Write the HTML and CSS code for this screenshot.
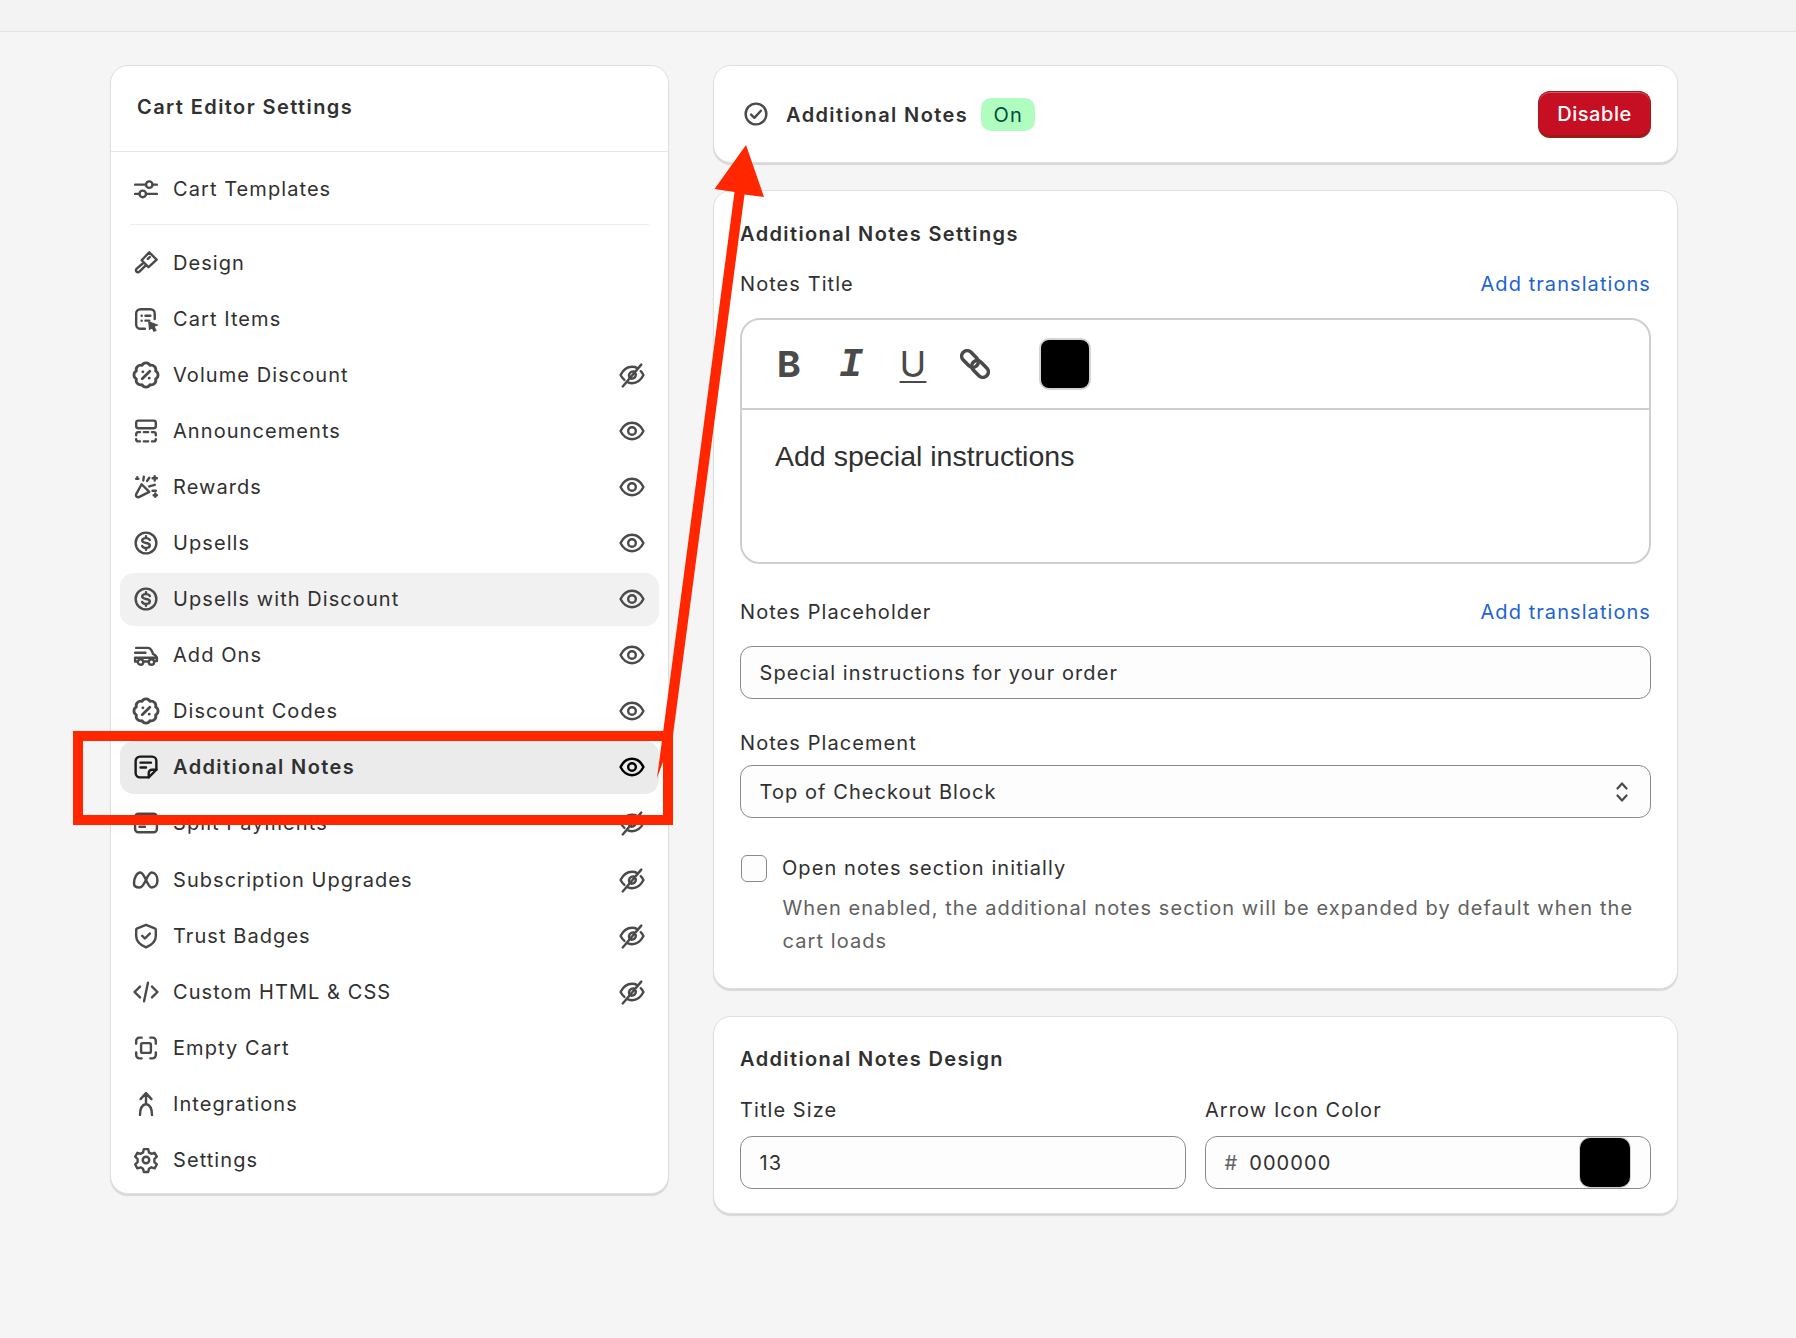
FILE: index.html
```html
<!DOCTYPE html>
<html lang="en">
<head>
    <meta charset="UTF-8">
    <title>Cart Editor Settings</title>
    <link rel="stylesheet" href="styles.css">
</head>
<body>
    <svg class="defs" xmlns="http://www.w3.org/2000/svg">
        <symbol id="i-sliders" viewBox="1 1 22 22"><path d="M2 8h10M18 8h4M2 16.500h4M12 16.500h10"/><circle cx="15" cy="8" r="3"/><circle cx="9" cy="16.500" r="3"/></symbol>
        <symbol id="i-brush" viewBox="1 1 22 22"><path d="M15 2.200l6.800 6.800-7.500 6.800-6.300-6.300zM15.500 6.500l-1.800 1.800M9.500 12l-6 5.200c-1 1-.9 1.900-.2 2.700s1.800.9 2.700 0l5.800-5.700"/></symbol>
        <symbol id="i-items" viewBox="1 1 22 22"><path d="M11 21H7a4 4 0 0 1-4-4V7a4 4 0 0 1 4-4h9a4 4 0 0 1 4 4v5"/><path d="M8 9h.1M8 13.500h.1M11.500 9H16M11.500 13.500H15"/><path class="solid" d="M14.500 14.500l8 3-3.200 1.300 1.900 3.700-2 .8-1.700-3.700-2.300 2z"/></symbol>
        <symbol id="i-percent" viewBox="2.500 2.500 19 19"><path d="M15.140 4.420A3.500 3.500 0 0 1 19.580 8.860 3.500 3.500 0 0 1 19.580 15.140 3.500 3.500 0 0 1 15.140 19.580 3.500 3.500 0 0 1 8.860 19.580 3.500 3.500 0 0 1 4.420 15.140 3.500 3.500 0 0 1 4.420 8.860 3.500 3.500 0 0 1 8.860 4.420 3.500 3.500 0 0 1 15.140 4.420z"/><path d="M9 15l6-6M9.500 9.500h.1M14.500 14.500h.1"/></symbol>
        <symbol id="i-announce" viewBox="1 1 22 22"><rect x="3" y="2.500" width="18" height="7" rx="2"/><path d="M3 16v-1a2 2 0 0 1 2-2h1.500M10 13h4M17.500 13H19a2 2 0 0 1 2 2v1M21 19.500a2 2 0 0 1-2 2h-1.500M14 21.500h-4M6.500 21.500H5a2 2 0 0 1-2-2"/></symbol>
        <symbol id="i-rewards" viewBox="1 1 22 22"><path d="M8 9.500l7 7-9.500 4.800c-1.600.6-3.200-1-2.600-2.600z"/><path d="M4 3v.1M3 4.500h2M10 2.500L9.500 6M15 3.500l-2 3M20 2v4M18 4h4M15 11.500l5-1.500M18 15.500h3M20.500 18v3M19 19.500h3"/></symbol>
        <symbol id="i-dollar" viewBox="1 1 22 22"><circle cx="12" cy="12" r="9.500"/><path d="M15.500 9.300C15 8.200 13.700 7.500 12 7.500c-2 0-3.500 1-3.500 2.300s1.400 1.900 3.500 2.200 3.500 1 3.500 2.300-1.500 2.200-3.500 2.200c-1.700 0-3-.7-3.500-1.800M12 5.800v1.700M12 16.500v1.700"/></symbol>
        <symbol id="i-truck" viewBox="1 1 22 22"><path d="M3 5.500h10.500c2 0 2.800.8 3.700 2.500l1.300 3 2.300 1.500c.7.600 1.200 1.500 1.200 2.500v2.500h-2M14 18h-4M3.500 18H2v-3.500M2 10h9.500M2 14.500h20"/><circle cx="7" cy="18.500" r="2.500"/><circle cx="17" cy="18.500" r="2.500"/></symbol>
        <symbol id="i-note" viewBox="1 1 22 22"><path d="M14.500 21.500H6.500a4 4 0 0 1-4-4v-11a4 4 0 0 1 4-4h11a4 4 0 0 1 4 4v8z"/><path d="M7 8h9.500M7 12.500h5M14.500 21.500v-4a3 3 0 0 1 3-3h4"/></symbol>
        <symbol id="i-split" viewBox="1 1 22 22"><rect x="2" y="3.500" width="20" height="17" rx="3"/><path class="solid" d="M2 5h20v5H2z"/><path d="M6 15.500h5"/></symbol>
        <symbol id="i-infinity" viewBox="1.500 1.500 21 21"><path d="M1.500 15c0-5 2.500-9.500 5.500-9.500 4 0 6 13 10 13 3 0 5-2.500 5-6 0-4-2-7-5-7-4 0-6 13-10.500 13-3 0-5-1-5-3.500z"/></symbol>
        <symbol id="i-shield" viewBox="1 1 22 22"><path d="M12 1.800l8 3.200c.6.300 1 .8 1 1.500v5.500c0 4.800-3.700 8.200-9 10.500-5.300-2.300-9-5.700-9-10.500V6.500c0-.7.400-1.200 1-1.500z"/><path d="M8.500 11.800l2.500 2.500 4.500-4.500"/></symbol>
        <symbol id="i-code" viewBox="1 1 22 22"><path d="M6.500 7L1.500 12l5 5M17.500 7l5 5-5 5M13.800 3.500l-3.600 17"/></symbol>
        <symbol id="i-empty" viewBox="1 1 22 22"><path d="M8 2.500H6a3 3 0 0 0-3 3V8M16 2.500h2a3 3 0 0 1 3 3V8M8 21.500H6a3 3 0 0 1-3-3V16M16 21.500h2a3 3 0 0 0 3-3V16"/><rect x="7.500" y="7.500" width="9" height="9" rx="1.500"/></symbol>
        <symbol id="i-merge" viewBox="1 1 22 22"><path d="M7 7.500l5-5.500 5 5.500M12 2v10M12 12c-3.500.8-5.500 3.500-5.500 10M12 12c3.500.8 5.500 3.500 5.500 10"/></symbol>
        <symbol id="i-gear" viewBox="1 1 22 22"><path d="M10 2h4l.7 3 2.200 1.300 3-.9 2 3.500-2.200 2.200v2.800l2.200 2.200-2 3.500-3-.9-2.200 1.300-.7 3h-4l-.7-3-2.200-1.300-3 .9-2-3.500 2.200-2.200v-2.800L2.100 8.900l2-3.500 3 .9 2.200-1.300z"/><circle cx="12" cy="12" r="3"/></symbol>
        <symbol id="i-eye" viewBox="1 1 22 22"><path d="M1.500 12C4 7 7.500 4.500 12 4.500S20 7 22.500 12c-2.500 5-6 7.500-10.500 7.500S4 17 1.500 12z"/><circle cx="12" cy="12" r="3.500"/></symbol>
        <symbol id="i-eye-off" viewBox="1 1 22 22"><path d="M5 16.500c-1.400-1.200-2.500-2.700-3.500-4.500C4 7 7.500 4.500 12 4.500c1.800 0 3.400.4 4.800 1.200M20 8.500c1 1 1.800 2.200 2.500 3.500-2.500 5-6 7.500-10.500 7.500-1.200 0-2.300-.2-3.300-.5M20.500 2.500l-17 20M9.500 14c-1.200-2.500 1-5.500 4-5.300M15.500 11c.4 2.500-1.500 4.500-4 4.500"/></symbol>
        <symbol id="i-check" viewBox="1 1 22 22"><circle cx="12" cy="12" r="9.500"/><path d="M7.500 12.500l3 3 6-6.500"/></symbol>
        <symbol id="i-link" viewBox="0 0 30 30"><rect x="-9.500" y="-5.500" width="19" height="11" rx="5.500" transform="translate(10 10) rotate(45)"/><rect x="-9.500" y="-5.500" width="19" height="11" rx="5.500" transform="translate(20 20) rotate(45)"/></symbol>
        <symbol id="i-updown" viewBox="0 0 16 24"><path d="M3.500 8.500L8 3.500l4.500 5M3.500 15.500L8 20.500l4.500-5"/></symbol>
    </svg>

    <div class="topbar"></div>

    <main class="layout">
        <aside class="card sidebar">
            <h2 class="sidebar-title">Cart Editor Settings</h2>
            <div class="sidebar-top">
                <a class="nav-row"><svg class="icon"><use href="#i-sliders"/></svg><span>Cart Templates</span></a>
            </div>
            <nav class="nav-list">
                <a class="nav-row"><svg class="icon"><use href="#i-brush"/></svg><span>Design</span></a>
                <a class="nav-row"><svg class="icon"><use href="#i-items"/></svg><span>Cart Items</span></a>
                <a class="nav-row"><svg class="icon"><use href="#i-percent"/></svg><span>Volume Discount</span><svg class="icon eye"><use href="#i-eye-off"/></svg></a>
                <a class="nav-row"><svg class="icon"><use href="#i-announce"/></svg><span>Announcements</span><svg class="icon eye"><use href="#i-eye"/></svg></a>
                <a class="nav-row"><svg class="icon"><use href="#i-rewards"/></svg><span>Rewards</span><svg class="icon eye"><use href="#i-eye"/></svg></a>
                <a class="nav-row"><svg class="icon"><use href="#i-dollar"/></svg><span>Upsells</span><svg class="icon eye"><use href="#i-eye"/></svg></a>
                <a class="nav-row hovered"><svg class="icon"><use href="#i-dollar"/></svg><span>Upsells with Discount</span><svg class="icon eye"><use href="#i-eye"/></svg></a>
                <a class="nav-row"><svg class="icon"><use href="#i-truck"/></svg><span>Add Ons</span><svg class="icon eye"><use href="#i-eye"/></svg></a>
                <a class="nav-row"><svg class="icon"><use href="#i-percent"/></svg><span>Discount Codes</span><svg class="icon eye"><use href="#i-eye"/></svg></a>
                <a class="nav-row active"><svg class="icon"><use href="#i-note"/></svg><span>Additional Notes</span><svg class="icon eye"><use href="#i-eye"/></svg></a>
                <a class="nav-row"><svg class="icon"><use href="#i-split"/></svg><span>Split Payments</span><svg class="icon eye"><use href="#i-eye-off"/></svg></a>
                <a class="nav-row"><svg class="icon"><use href="#i-infinity"/></svg><span>Subscription Upgrades</span><svg class="icon eye"><use href="#i-eye-off"/></svg></a>
                <a class="nav-row"><svg class="icon"><use href="#i-shield"/></svg><span>Trust Badges</span><svg class="icon eye"><use href="#i-eye-off"/></svg></a>
                <a class="nav-row"><svg class="icon"><use href="#i-code"/></svg><span>Custom HTML &amp; CSS</span><svg class="icon eye"><use href="#i-eye-off"/></svg></a>
                <a class="nav-row"><svg class="icon"><use href="#i-empty"/></svg><span>Empty Cart</span></a>
                <a class="nav-row"><svg class="icon"><use href="#i-merge"/></svg><span>Integrations</span></a>
                <a class="nav-row"><svg class="icon"><use href="#i-gear"/></svg><span>Settings</span></a>
            </nav>
        </aside>

        <section class="content">
            <div class="card status-card">
                <svg class="icon status-icon"><use href="#i-check"/></svg>
                <h1 class="status-title">Additional Notes</h1>
                <span class="badge">On</span>
                <button class="btn-disable">Disable</button>
            </div>

            <div class="card settings-card">
                <h3 class="card-heading">Additional Notes Settings</h3>
                <div class="label-row title-label">
                    <span>Notes Title</span>
                    <a class="link">Add translations</a>
                </div>
                <div class="editor">
                    <div class="toolbar">
                        <span class="tool tool-b">B</span>
                        <span class="tool tool-i">I</span>
                        <span class="tool tool-u">U</span>
                        <span class="tool"><svg class="link-icon"><use href="#i-link"/></svg></span>
                        <span class="color-swatch"></span>
                    </div>
                    <div class="editor-body">Add special instructions</div>
                </div>
                <div class="label-row placeholder-label">
                    <span>Notes Placeholder</span>
                    <a class="link">Add translations</a>
                </div>
                <div class="field">Special instructions for your order</div>
                <div class="label-row placement-label">
                    <span>Notes Placement</span>
                </div>
                <div class="field select">
                    <span>Top of Checkout Block</span>
                    <svg class="updown"><use href="#i-updown"/></svg>
                </div>
                <div class="check-row">
                    <span class="checkbox"></span>
                    <span>Open notes section initially</span>
                </div>
                <p class="help">When enabled, the additional notes section will be expanded by default when the cart loads</p>
            </div>

            <div class="card design-card">
                <h3 class="card-heading">Additional Notes Design</h3>
                <div class="design-grid">
                    <div class="design-col">
                        <div class="label-row">Title Size</div>
                        <div class="field">13</div>
                    </div>
                    <div class="design-col">
                        <div class="label-row">Arrow Icon Color</div>
                        <div class="field color-field">
                            <span class="hash">#</span>
                            <span>000000</span>
                            <span class="field-swatch"></span>
                        </div>
                    </div>
                </div>
            </div>
        </section>
    </main>

    <!-- red markup drawn over the screenshot -->
    <svg class="markup" viewBox="0 0 1796 1338" xmlns="http://www.w3.org/2000/svg">
        <rect x="78" y="736" width="590" height="84" fill="none" stroke="#ff2600" stroke-width="10"/>
        <path d="M746 145L764 197 744.500 194.500 673 735 657 778 734.500 192 714.500 189z" fill="#ff2600"/>
    </svg>
</body>
</html>
```
FILE: styles.css
```css
* {
    box-sizing: border-box;
}

body {
    margin: 0;
    min-height: 1338px;
    background: #f5f5f5;
    font-family: Inter, "Noto Sans", sans-serif;
    font-size: 20px;
    letter-spacing: 1.07px;
    color: #303030;
    position: relative;
}

.defs {
    position: absolute;
    width: 0;
    height: 0;
}

.topbar {
    height: 32px;
    border-bottom: 1px solid #e3e3e3;
    background: #f3f3f3;
}

.layout {
    display: grid;
    grid-template-columns: 559px 965px;
    column-gap: 44px;
    align-items: start;
    padding: 33px 0 0 110px;
}

.card {
    background: #fff;
    border: 1px solid #dfdfdf;
    border-radius: 18px;
    box-shadow: 0 2px 1px rgba(0, 0, 0, 0.12);
}

.icon {
    width: 24px;
    height: 24px;
    flex: none;
    overflow: visible;
}

symbol {
    overflow: visible;
}

svg use {
    fill: none;
    stroke: currentColor;
    stroke-width: 2.2;
    stroke-linecap: round;
    stroke-linejoin: round;
}

.solid {
    fill: currentColor;
    stroke-width: 1;
}

/* sidebar */
.sidebar {
    height: 1129px;
}

.sidebar-title {
    margin: 0;
    height: 86px;
    padding: 0 0 3px 26px;
    display: flex;
    align-items: center;
    font-size: 20px;
    font-weight: 600;
    letter-spacing: 1.42px;
    border-bottom: 1px solid #e8e8e8;
}

.sidebar-top {
    margin: 0 19px;
    padding: 10px 0 9px;
    border-bottom: 1px solid #ececec;
}

.sidebar-top .nav-row {
    margin: 0 -10px;
}

.nav-list {
    display: flex;
    flex-direction: column;
    gap: 3.1px;
    padding: 11px 9px 0;
}

.nav-row {
    height: 53px;
    display: flex;
    align-items: center;
    gap: 15px;
    padding: 0 15px 0 14px;
    border-radius: 14px;
    color: #4a4a4a;
}

.nav-row span {
    color: #303030;
    flex: 1;
}

.nav-row.hovered {
    background: #f1f1f1;
}

.nav-row.active {
    background: #ebebeb;
    color: #1a1a1a;
}

.nav-row.active span {
    font-weight: 600;
    letter-spacing: 1.38px;
}

.eye {
    color: #4a4a4a;
}

.active .eye {
    color: #000;
}

/* right column */
.content {
    display: flex;
    flex-direction: column;
    gap: 27px;
}

.status-card {
    height: 98px;
    display: flex;
    align-items: center;
    padding: 0 26px 0 30px;
}

.status-icon {
    color: #4a4a4a;
}

.status-title {
    margin: 0 0 0 18px;
    padding-top: 1px;
    font-size: 20px;
    font-weight: 600;
    letter-spacing: 1.38px;
}

.badge {
    margin-left: 13px;
    height: 33px;
    padding: 1px 12.5px 0;
    display: flex;
    align-items: center;
    border-radius: 10px;
    background: #affebf;
    color: #014b40;
}

.btn-disable {
    margin-left: auto;
    width: 113px;
    height: 47px;
    padding-top: 2px;
    border: 1px solid #a81a1a;
    border-bottom: 3px solid #9a1c14;
    border-radius: 12px;
    background: #c70f24;
    box-shadow: inset 0 1px 0 rgba(255, 255, 255, 0.3);
    color: #fff;
    font: 500 20px Inter, sans-serif;
    letter-spacing: 0.55px;
}

.settings-card {
    height: 799px;
    padding: 29px 26px 0;
}

.card-heading {
    margin: 0;
    font-size: 20px;
    font-weight: 600;
    letter-spacing: 1.38px;
    line-height: 28px;
}

.label-row {
    display: flex;
    justify-content: space-between;
    line-height: 28px;
}

.title-label {
    margin-top: 22px;
    margin-bottom: 20px;
}

.placeholder-label {
    margin-top: 34px;
    margin-bottom: 20px;
}

.placement-label {
    margin-top: 30px;
    margin-bottom: 8px;
}

.link {
    color: #1c63d5;
}

.editor {
    height: 246px;
    border: 2px solid #cfcfcf;
    border-radius: 20px;
}

.toolbar {
    height: 90px;
    display: flex;
    align-items: center;
    padding-left: 16px;
    border-bottom: 2px solid #cfcfcf;
}

.tool {
    width: 62px;
    display: flex;
    justify-content: center;
    align-items: center;
    color: #4a4a4a;
    font-size: 36px;
    line-height: 44px;
    letter-spacing: 0;
}

.tool-b {
    font-weight: 700;
}

.tool-i {
    font-family: "Liberation Mono", monospace;
    font-size: 40px;
    font-style: italic;
    font-weight: 700;
    padding-top: 3px;
}

.tool-u {
    text-decoration: underline;
    text-decoration-thickness: 2px;
    text-underline-offset: 4px;
}

.link-icon {
    width: 30px;
    height: 30px;
}

.link-icon use {
    stroke-width: 3.6;
}

.color-swatch {
    width: 52px;
    height: 52px;
    margin-left: 33px;
    background: #000;
    border: 2px solid #d4d4d4;
    border-radius: 10px;
}

.editor-body {
    padding: 28px 33px 0;
    font-family: Helvetica, "Liberation Sans", Arial, sans-serif;
    font-size: 28.5px;
    letter-spacing: 0;
    line-height: 36px;
}

.field {
    height: 53px;
    display: flex;
    align-items: center;
    padding: 0 18.5px;
    background: #fdfdfd;
    border: 1px solid #8a8a8a;
    border-radius: 12px;
}

.select {
    justify-content: space-between;
}

.updown {
    width: 16px;
    height: 24px;
    margin-right: 2px;
    color: #4a4a4a;
}

.check-row {
    margin-top: 36px;
    height: 28px;
    display: flex;
    align-items: center;
    gap: 15px;
    padding-left: 1px;
}

.checkbox {
    width: 26px;
    height: 27px;
    background: #fdfdfd;
    border: 1px solid #8a8a8a;
    border-radius: 6px;
}

.help {
    margin: 10px 0 0 42.5px;
    color: #616161;
    line-height: 33px;
}

.design-card {
    height: 198px;
    padding: 28px 26px 0;
}

.design-grid {
    margin-top: 22px;
    display: grid;
    grid-template-columns: 446px 446px;
    column-gap: 19px;
}

.design-col .label-row {
    margin-bottom: 12px;
    padding-top: 1px;
}

.color-field {
    position: relative;
}

.hash {
    margin-right: 11px;
    color: #616161;
}

.field-swatch {
    position: absolute;
    right: 20px;
    top: 1px;
    width: 50px;
    height: 49px;
    background: #000;
    border-radius: 10px;
    box-shadow: 0 0 0 1px #d4d4d4;
}

.markup {
    position: absolute;
    top: 0;
    left: 0;
    width: 1796px;
    height: 1338px;
    pointer-events: none;
}
```
